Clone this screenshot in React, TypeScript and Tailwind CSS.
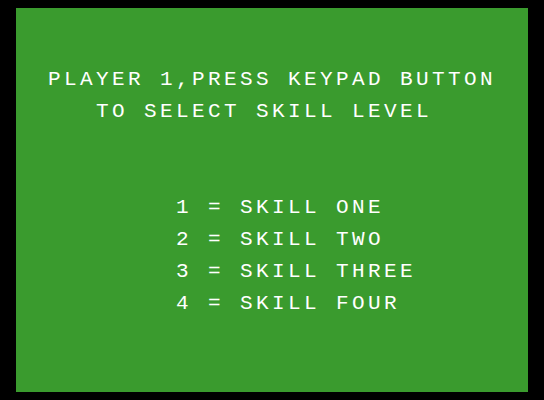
import React from 'react';

// Each text line sits on a 16px character grid (32 columns x 24 rows).
const lines = [
  { row: 4, col: 2, text: 'PLAYER 1,PRESS KEYPAD BUTTON' },
  { row: 6, col: 5, text: 'TO SELECT SKILL LEVEL' },
  { row: 12, col: 10, text: '1 = SKILL ONE' },
  { row: 14, col: 10, text: '2 = SKILL TWO' },
  { row: 16, col: 10, text: '3 = SKILL THREE' },
  { row: 18, col: 10, text: '4 = SKILL FOUR' },
];

const App: React.FC = () => {
  const rows = Array.from({ length: 24 }, (_, r) => lines.find((l) => l.row === r));

  return (
    <div className="w-[544px] h-[400px] bg-black pt-2 pl-4">
      <div className="w-[512px] h-[384px] bg-[#3a9b2e] flex flex-col font-['Liberation_Mono',monospace] text-[21px] leading-4 tracking-[3.4px] text-white">
        {rows.map((line, r) => (
          <div key={r} className="h-4 whitespace-pre">
            {line && <span style={{ paddingLeft: line.col * 16 }}>{line.text}</span>}
          </div>
        ))}
      </div>
    </div>
  );
};

export default App;
